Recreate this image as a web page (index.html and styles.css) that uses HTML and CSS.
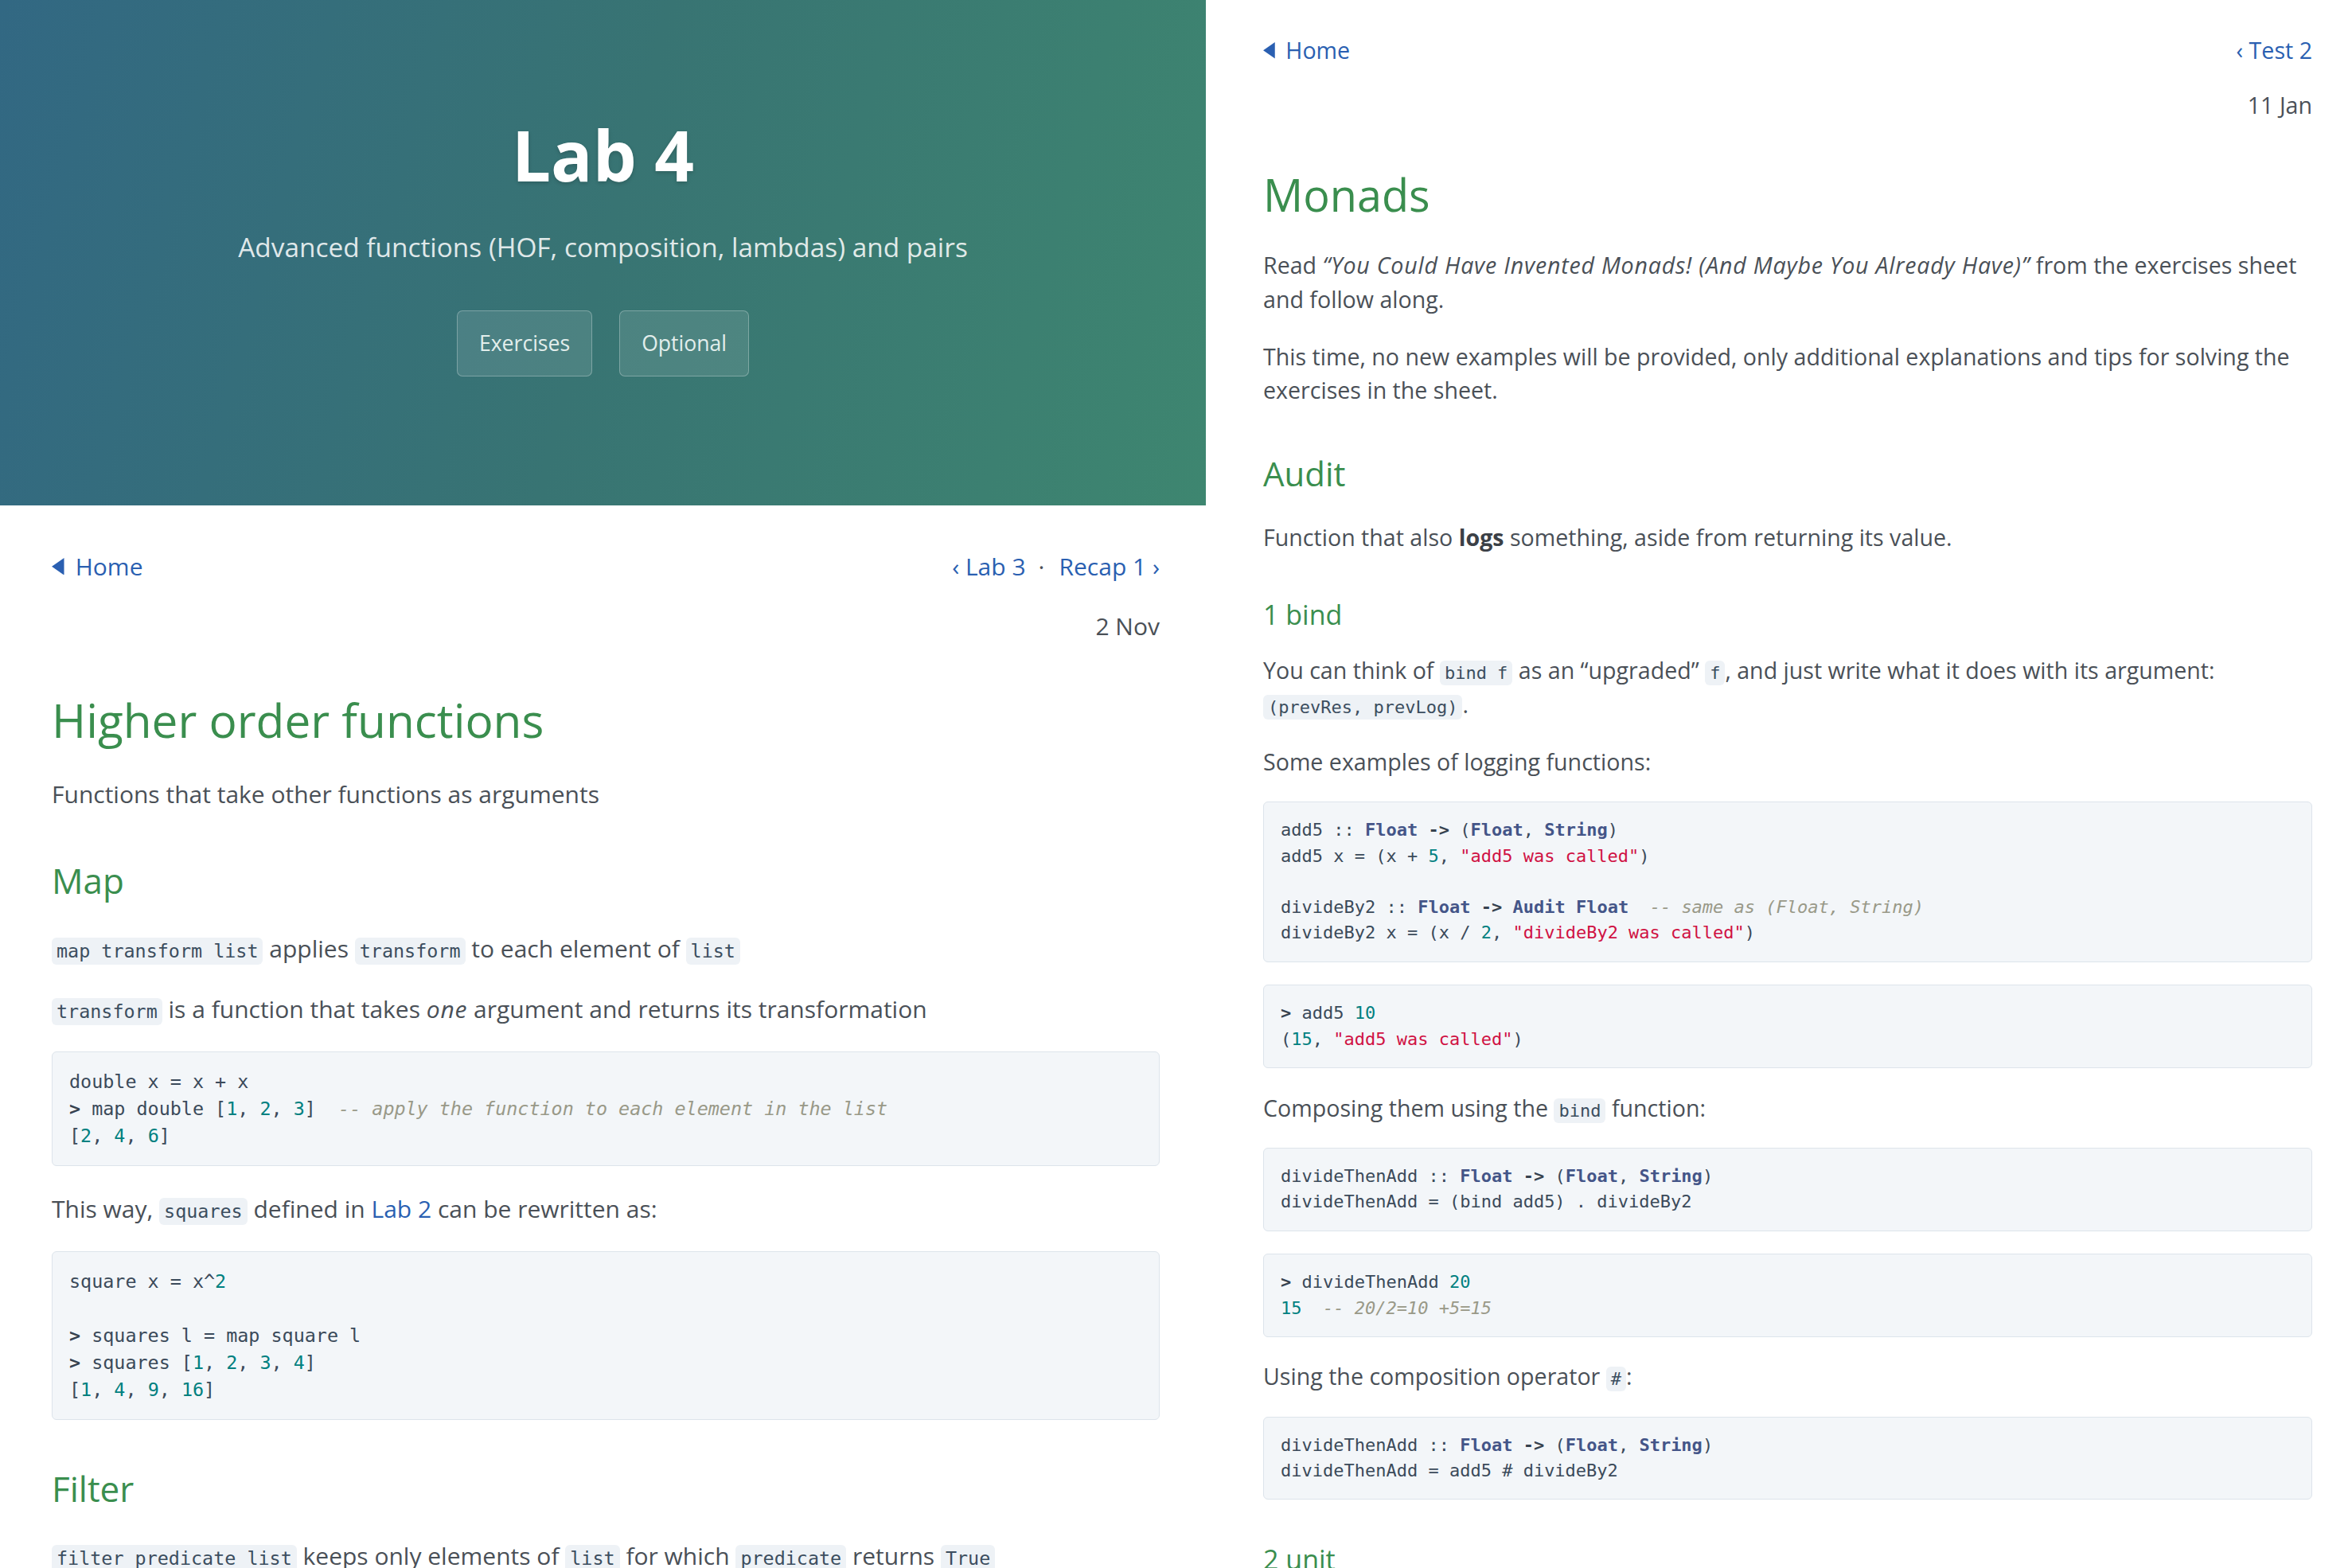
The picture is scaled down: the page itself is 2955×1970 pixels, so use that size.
FILE: index.html
```html
<!DOCTYPE html>
<html lang="en">
<head>
<meta charset="utf-8">
<title>Lab 4 · Monads</title>
<link rel="stylesheet" href="styles.css">
</head>
<body>
<div class="split">
  <section class="pane pane-left">
    <header class="hero">
      <h1 class="hero-title">Lab 4</h1>
      <p class="hero-sub">Advanced functions (HOF, composition, lambdas) and pairs</p>
      <div class="hero-actions">
        <a class="btn" href="#">Exercises</a>
        <a class="btn" href="#">Optional</a>
      </div>
    </header>
    <main class="doc doc-left">
      <nav class="topnav">
        <a class="home" href="#"><svg class="tri" viewBox="0 0 10 14" aria-hidden="true"><polygon points="10,0 10,14 0,7"/></svg>Home</a>
        <span class="pager"><a href="#">‹ Lab 3</a><span class="dot">·</span><a href="#">Recap 1 ›</a></span>
      </nav>
      <div class="date">2 Nov</div>

      <h1>Higher order functions</h1>
      <p>Functions that take other functions as arguments</p>

      <h2>Map</h2>
      <p><code class="ic">map transform list</code> applies <code class="ic">transform</code> to each element of <code class="ic">list</code></p>
      <p><code class="ic">transform</code> is a function that takes <em>one</em> argument and returns its transformation</p>
      <pre class="code"><span class="ln">double x = x + x</span><span class="ln"><b>&gt;</b> map double [<span class="n">1</span>, <span class="n">2</span>, <span class="n">3</span>]  <i class="c">-- apply the function to each element in the list</i></span><span class="ln">[<span class="n">2</span>, <span class="n">4</span>, <span class="n">6</span>]</span></pre>
      <p>This way, <code class="ic">squares</code> defined in <a href="#">Lab 2</a> can be rewritten as:</p>
      <pre class="code"><span class="ln">square x = x^<span class="n">2</span></span><span class="ln"> </span><span class="ln"><b>&gt;</b> squares l = map square l</span><span class="ln"><b>&gt;</b> squares [<span class="n">1</span>, <span class="n">2</span>, <span class="n">3</span>, <span class="n">4</span>]</span><span class="ln">[<span class="n">1</span>, <span class="n">4</span>, <span class="n">9</span>, <span class="n">16</span>]</span></pre>

      <h2>Filter</h2>
      <p><code class="ic">filter predicate list</code> keeps only elements of <code class="ic">list</code> for which <code class="ic">predicate</code> returns <code class="ic">True</code></p>
    </main>
  </section>

  <section class="pane pane-right">
    <main class="doc doc-right">
      <nav class="topnav">
        <a class="home" href="#"><svg class="tri" viewBox="0 0 10 14" aria-hidden="true"><polygon points="10,0 10,14 0,7"/></svg>Home</a>
        <span class="pager"><a href="#">‹ Test 2</a></span>
      </nav>
      <div class="date">11 Jan</div>

      <h1>Monads</h1>
      <p>Read <em>“You Could Have Invented Monads! (And Maybe You Already Have)”</em> from the exercises sheet and follow along.</p>
      <p>This time, no new examples will be provided, only additional explanations and tips for solving the exercises in the sheet.</p>

      <h2>Audit</h2>
      <p>Function that also <strong>logs</strong> something, aside from returning its value.</p>

      <h3>1 bind</h3>
      <p>You can think of <code class="ic">bind f</code> as an “upgraded” <code class="ic">f</code>, and just write what it does with its argument: <code class="ic">(prevRes, prevLog)</code>.</p>
      <p>Some examples of logging functions:</p>
      <pre class="code"><span class="ln">add5 :: <span class="t">Float</span> <b>-&gt;</b> (<span class="t">Float</span>, <span class="t">String</span>)</span><span class="ln">add5 x = (x + <span class="n">5</span>, <span class="s">"add5 was called"</span>)</span><span class="ln"> </span><span class="ln">divideBy2 :: <span class="t">Float</span> <b>-&gt;</b> <span class="t">Audit</span> <span class="t">Float</span>  <i class="c">-- same as (Float, String)</i></span><span class="ln">divideBy2 x = (x / <span class="n">2</span>, <span class="s">"divideBy2 was called"</span>)</span></pre>
      <pre class="code"><span class="ln"><b>&gt;</b> add5 <span class="n">10</span></span><span class="ln">(<span class="n">15</span>, <span class="s">"add5 was called"</span>)</span></pre>
      <p>Composing them using the <code class="ic">bind</code> function:</p>
      <pre class="code"><span class="ln">divideThenAdd :: <span class="t">Float</span> <b>-&gt;</b> (<span class="t">Float</span>, <span class="t">String</span>)</span><span class="ln">divideThenAdd = (bind add5) . divideBy2</span></pre>
      <pre class="code"><span class="ln"><b>&gt;</b> divideThenAdd <span class="n">20</span></span><span class="ln"><span class="n">15</span>  <i class="c">-- 20/2=10 +5=15</i></span></pre>
      <p>Using the composition operator <code class="ic">#</code>:</p>
      <pre class="code"><span class="ln">divideThenAdd :: <span class="t">Float</span> <b>-&gt;</b> (<span class="t">Float</span>, <span class="t">String</span>)</span><span class="ln">divideThenAdd = add5 # divideBy2</span></pre>

      <h3>2 unit</h3>
      <p>The identity for <code class="ic">bind</code>.</p>
    </main>
  </section>
</div>
</body>
</html>
```

FILE: styles.css
```css
html, body {
  margin: 0;
  padding: 0;
  background: #ffffff;
}

body {
  width: 2955px;
  height: 1970px;
  overflow: hidden;
  font-family: "Open Sans", "Noto Sans", sans-serif;
  color: #4a5057;
}

.split {
  display: grid;
  grid-template-columns: 1515px 1440px;
  height: 1970px;
}

.pane {
  --u: 30px;
  --code: 23.4px;
  --clh: 34px;
  font-size: var(--u);
  line-height: 1.5;
  overflow: hidden;
  min-width: 0;
}

.pane-right {
  --u: 28.6px;
  --code: 22px;
  --clh: 32.3px;
}

/* ---------- hero ---------- */
.hero {
  height: 635px;
  box-sizing: border-box;
  padding-top: 140px;
  text-align: center;
  background: linear-gradient(105deg, #326883 0%, #387473 50%, #3e8670 100%);
  color: #ffffff;
}

.hero-title {
  margin: 0;
  font-size: 87px;
  line-height: 108px;
  font-weight: 700;
  text-shadow: 0 2px 5px rgba(0, 0, 0, 0.18);
}

.hero-sub {
  margin: 37px 0 0;
  font-size: 33.4px;
  line-height: 51px;
  color: rgba(255, 255, 255, 0.86);
}

.hero-actions {
  display: flex;
  justify-content: center;
  gap: 34px;
  margin-top: 54px;
}

.btn {
  font-size: 26.6px;
  line-height: 41px;
  padding: 20px 27px;
  border: 1px solid rgba(255, 255, 255, 0.28);
  border-radius: 7px;
  background: rgba(255, 255, 255, 0.1);
  color: #e2eeec;
  text-decoration: none;
}

/* ---------- document ---------- */
.doc-left {
  padding: 54px 58px 0 65px;
}

.doc-right {
  padding: 42px 50px 0 72px;
}

a {
  color: #2a5fb1;
  text-decoration: none;
}

.topnav {
  display: flex;
  justify-content: space-between;
  align-items: center;
}

.home {
  display: inline-flex;
  align-items: center;
  gap: calc(0.47 * var(--u));
}

.tri {
  width: calc(0.52 * var(--u));
  height: calc(0.72 * var(--u));
  fill: #2a5fb1;
}

.dot {
  margin: 0 18px 0 16px;
  color: #4a5057;
}

.date {
  text-align: right;
  margin-top: 30px;
}

.doc-right .date {
  margin-top: 26px;
}

.doc h1,
.doc h2,
.doc h3 {
  font-weight: 400;
  color: #3a8e4e;
  line-height: 1.2;
  margin: calc(2 * var(--u)) 0 calc(1.2 * var(--u));
}

.doc h1 {
  font-size: calc(1.95 * var(--u));
}

.doc h2 {
  font-size: calc(1.467 * var(--u));
}

.doc h3 {
  font-size: calc(1.19 * var(--u));
  margin: calc(1.92 * var(--u)) 0 var(--u);
}

.doc p {
  margin: calc(1.03 * var(--u)) 0;
}

.doc-right p {
  margin: var(--u) 0;
}

em {
  letter-spacing: 0.027em;
}

strong {
  font-weight: 700;
  color: #3b4046;
}

.ic {
  font-family: "DejaVu Sans Mono", monospace;
  font-size: var(--code);
  padding: 3px 6px;
  border-radius: 6px;
  background: #eef2f6;
  color: #3c4e5f;
}

.code {
  margin: calc(1.03 * var(--u)) 0;
  padding: 20px 21px;
  background: #f3f6f9;
  border: 1px solid #dde4eb;
  border-radius: 6px;
  font-family: "DejaVu Sans Mono", monospace;
  font-size: var(--code);
  line-height: var(--clh);
  color: #3b4a5a;
  white-space: pre;
  overflow: hidden;
}

.ln {
  display: block;
}

.doc-right .code {
  margin: var(--u) 0;
  padding: 19px 21px;
}

.code b {
  font-weight: 700;
  color: #36424f;
}

.code .n {
  color: #008080;
}

.code .s {
  color: #d01143;
}

.code .t {
  color: #445588;
  font-weight: 700;
}

.code .c {
  color: #999988;
  font-style: italic;
}
```
